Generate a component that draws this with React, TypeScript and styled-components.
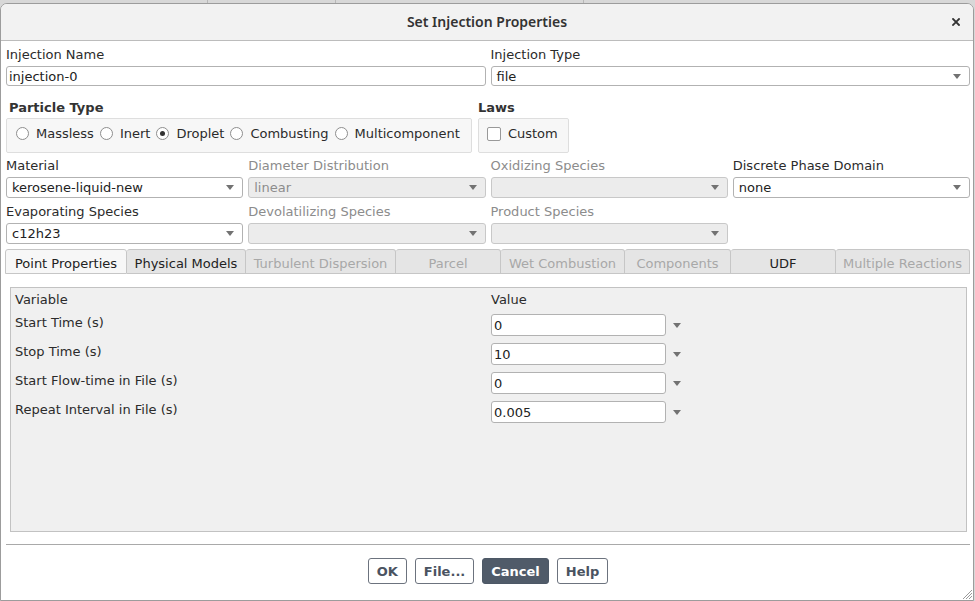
import React from "react";
import styled, { createGlobalStyle } from "styled-components";

const GlobalStyle = createGlobalStyle`
  html, body {
    margin: 0;
    padding: 0;
  }
  body {
    width: 975px;
    height: 601px;
    overflow: hidden;
    background-color: #d8d8d8;
    background-image:
      linear-gradient(to right, transparent 207px, #b8b8b8 207px, #b8b8b8 208px, transparent 208px),
      linear-gradient(to right, transparent 335px, #b8b8b8 335px, #b8b8b8 336px, transparent 336px),
      linear-gradient(to right, transparent 583px, #b8b8b8 583px, #b8b8b8 584px, transparent 584px);
    background-size: 100% 4px;
    background-repeat: no-repeat;
    font-family: "DejaVu Sans", "Liberation Sans", sans-serif;
    font-size: 13px;
    color: #2b2b2b;
  }
`;

const Window = styled.div`
  position: relative;
  box-sizing: border-box;
  width: 974px;
  height: 598px;
  margin-top: 3px;
  border: 1px solid #9c9c9c;
  border-radius: 7px 7px 0 0;
  background: #fff;
  display: flex;
  flex-direction: column;
  overflow: hidden;
`;

const TitleBar = styled.div`
  box-sizing: border-box;
  height: 37px;
  flex: none;
  display: grid;
  grid-template-columns: 1fr auto 1fr;
  align-items: center;
  padding-bottom: 2px;
  background: #f2f2f2;
  border-bottom: 1px solid #bcbcbc;
`;

const Title = styled.div`
  grid-column: 2;
  font-family: "Noto Sans", "DejaVu Sans", sans-serif;
  font-size: 14px;
  font-weight: 600;
  color: #333;
`;

const CloseButton = styled.div`
  grid-column: 3;
  justify-self: end;
  display: flex;
  margin-right: 13px;
  margin-top: 1px;
`;

const Body = styled.div`
  flex: 1;
  display: flex;
  flex-direction: column;
  padding: 6px 3px 0 5px;
`;

const TwoCols = styled.div`
  display: grid;
  grid-template-columns: 1fr 1fr;
  column-gap: 5px;
`;

const FourCols = styled.div`
  display: grid;
  grid-template-columns: repeat(4, 1fr);
  column-gap: 5px;
  row-gap: 6px;
  margin-top: 5px;
`;

const Field = styled.div`
  display: flex;
  flex-direction: column;
  gap: 3px;
  min-width: 0;
`;

const Label = styled.div<{ $disabled?: boolean }>`
  line-height: 16px;
  white-space: nowrap;
  color: ${(p) => (p.$disabled ? "#8c8c8c" : "#2b2b2b")};
`;

const TextInput = styled.div<{ $height?: number }>`
  box-sizing: border-box;
  height: ${(p) => p.$height ?? 20}px;
  display: flex;
  align-items: center;
  padding: 0 2px;
  border: 1px solid #b2b2b2;
  border-radius: 3px;
  background: #fff;
  color: #222;
`;

const SelectBox = styled.div<{ $disabled?: boolean; $height?: number }>`
  box-sizing: border-box;
  height: ${(p) => p.$height ?? 21}px;
  display: flex;
  align-items: center;
  justify-content: space-between;
  padding: 0 8px 0 5px;
  border: 1px solid ${(p) => (p.$disabled ? "#c8c8c8" : "#b2b2b2")};
  border-radius: 3px;
  background: ${(p) => (p.$disabled ? "#ececec" : "#fff")};
  color: ${(p) => (p.$disabled ? "#8c8c8c" : "#222")};
`;

const GroupRow = styled.div`
  display: flex;
  gap: 6px;
  margin-top: 14px;
`;

const Group = styled.div`
  display: flex;
  flex-direction: column;
  gap: 2px;
`;

const GroupTitle = styled.div<{ $indent?: number }>`
  font-weight: bold;
  line-height: 16px;
  padding-left: ${(p) => p.$indent ?? 0}px;
  color: #333;
`;

const GroupBox = styled.div<{ $padLeft: number; $padRight: number }>`
  box-sizing: border-box;
  height: 35px;
  display: flex;
  align-items: center;
  gap: 6px;
  padding: 0 ${(p) => p.$padRight}px 4px ${(p) => p.$padLeft}px;
  background: #f7f7f7;
  border: 1px solid #dedede;
  border-radius: 2px;
`;

const Option = styled.label`
  display: flex;
  align-items: center;
  gap: 7px;
  white-space: nowrap;
`;

const Radio = styled.span<{ $checked?: boolean }>`
  box-sizing: border-box;
  width: 13px;
  height: 13px;
  border-radius: 50%;
  border: 1px solid #8e8e8e;
  background: #fff;
  display: inline-flex;
  align-items: center;
  justify-content: center;
  &::after {
    content: "";
    width: 5px;
    height: 5px;
    border-radius: 50%;
    background: #333;
    display: ${(p) => (p.$checked ? "block" : "none")};
  }
`;

const Checkbox = styled.span`
  box-sizing: border-box;
  width: 14px;
  height: 14px;
  border: 1px solid #999;
  border-radius: 2px;
  background: #fff;
`;

const TabBar = styled.div`
  display: flex;
  height: 25px;
  margin-top: 5px;
  margin-left: -1px;
`;

const Tab = styled.div<{ $width: number; $active?: boolean; $disabled?: boolean; $first?: boolean }>`
  box-sizing: border-box;
  width: ${(p) => p.$width}px;
  display: flex;
  align-items: center;
  justify-content: center;
  padding-top: 3px;
  white-space: nowrap;
  border: 1px solid #c6c6c6;
  border-left: ${(p) => (p.$first ? "1px solid #c6c6c6" : "none")};
  border-radius: 3px 3px 0 0;
  background: ${(p) => (p.$active ? "#f7f7f7" : "#e5e5e5")};
  color: ${(p) => (p.$disabled ? "#a8a8a8" : "#222")};
`;

const Panel = styled.div`
  box-sizing: border-box;
  height: 245px;
  margin: 13px 3px 0 4px;
  padding: 3px 4px;
  background: #f0f0f0;
  border: 1px solid #c2c2c2;
`;

const PropTable = styled.div`
  display: grid;
  grid-template-columns: 476px 175px auto;
  grid-template-rows: 16px;
  grid-auto-rows: 22px;
  row-gap: 7px;
  align-items: center;
`;

const HeaderCell = styled.div<{ $span?: number }>`
  line-height: 16px;
  padding-top: 1px;
  grid-column: span ${(p) => p.$span ?? 1};
`;

const NameCell = styled.div`
  align-self: start;
  line-height: 16px;
  padding-top: 1px;
`;

const ArrowCell = styled.div`
  display: flex;
  padding-left: 7px;
`;

const Separator = styled.div`
  height: 1px;
  margin-top: 12px;
  background: #a9a9a9;
`;

const ButtonRow = styled.div`
  display: flex;
  justify-content: center;
  gap: 8px;
  margin-top: 13px;
`;

const Button = styled.button<{ $primary?: boolean }>`
  box-sizing: border-box;
  height: 26px;
  padding: 0 8px;
  font-family: "DejaVu Sans", sans-serif;
  font-size: 13px;
  font-weight: bold;
  border: 1px solid ${(p) => (p.$primary ? "#4d5866" : "#6c737e")};
  border-radius: 3px;
  background: ${(p) => (p.$primary ? "#505b69" : "#fff")};
  color: ${(p) => (p.$primary ? "#fff" : "#4a5361")};
`;

const Grip = styled.svg`
  position: absolute;
  right: 0;
  bottom: 0;
`;

const Arrow = () => (
  <svg width="8" height="5" viewBox="0 0 8 5">
    <polygon points="0,0 8,0 4,5" fill="#727272" />
  </svg>
);

const Select = ({ value, disabled, height }: { value?: string; disabled?: boolean; height?: number }) => (
  <SelectBox $disabled={disabled} $height={height}>
    <span>{value}</span>
    <Arrow />
  </SelectBox>
);

const particleTypes = [
  { name: "Massless" },
  { name: "Inert" },
  { name: "Droplet", checked: true },
  { name: "Combusting" },
  { name: "Multicomponent" },
];

const tabs = [
  { name: "Point Properties", width: 122, active: true },
  { name: "Physical Models", width: 119 },
  { name: "Turbulent Dispersion", width: 150, disabled: true },
  { name: "Parcel", width: 105, disabled: true },
  { name: "Wet Combustion", width: 124, disabled: true },
  { name: "Components", width: 106, disabled: true },
  { name: "UDF", width: 105 },
  { name: "Multiple Reactions", width: 134, disabled: true },
];

const pointProps = [
  { name: "Start Time (s)", value: "0" },
  { name: "Stop Time (s)", value: "10" },
  { name: "Start Flow-time in File (s)", value: "0" },
  { name: "Repeat Interval in File (s)", value: "0.005" },
];

export default function App() {
  return (
    <>
      <GlobalStyle />
      <Window>
        <TitleBar>
          <Title>Set Injection Properties</Title>
          <CloseButton>
            <svg width="8" height="8" viewBox="0 0 8 8">
              <path d="M1 1 L7 7 M7 1 L1 7" stroke="#333" strokeWidth="1.8" strokeLinecap="square" />
            </svg>
          </CloseButton>
        </TitleBar>
        <Body>
          <TwoCols>
            <Field>
              <Label>Injection Name</Label>
              <TextInput>injection-0</TextInput>
            </Field>
            <Field>
              <Label>Injection Type</Label>
              <Select value="file" height={20} />
            </Field>
          </TwoCols>

          <GroupRow>
            <Group>
              <GroupTitle $indent={3}>Particle Type</GroupTitle>
              <GroupBox $padLeft={9} $padRight={11}>
                {particleTypes.map((t) => (
                  <Option key={t.name}>
                    <Radio $checked={t.checked} />
                    {t.name}
                  </Option>
                ))}
              </GroupBox>
            </Group>
            <Group>
              <GroupTitle>Laws</GroupTitle>
              <GroupBox $padLeft={8} $padRight={10}>
                <Option>
                  <Checkbox />
                  Custom
                </Option>
              </GroupBox>
            </Group>
          </GroupRow>

          <FourCols>
            <Field>
              <Label>Material</Label>
              <Select value="kerosene-liquid-new" />
            </Field>
            <Field>
              <Label $disabled>Diameter Distribution</Label>
              <Select value="linear" disabled />
            </Field>
            <Field>
              <Label $disabled>Oxidizing Species</Label>
              <Select disabled />
            </Field>
            <Field>
              <Label>Discrete Phase Domain</Label>
              <Select value="none" />
            </Field>
            <Field>
              <Label>Evaporating Species</Label>
              <Select value="c12h23" />
            </Field>
            <Field>
              <Label $disabled>Devolatilizing Species</Label>
              <Select disabled />
            </Field>
            <Field>
              <Label $disabled>Product Species</Label>
              <Select disabled />
            </Field>
          </FourCols>

          <TabBar>
            {tabs.map((t, i) => (
              <Tab key={t.name} $width={t.width} $active={t.active} $disabled={t.disabled} $first={i === 0}>
                {t.name}
              </Tab>
            ))}
          </TabBar>

          <Panel>
            <PropTable>
              <HeaderCell>Variable</HeaderCell>
              <HeaderCell $span={2}>Value</HeaderCell>
              {pointProps.map((p) => (
                <React.Fragment key={p.name}>
                  <NameCell>{p.name}</NameCell>
                  <TextInput $height={22}>{p.value}</TextInput>
                  <ArrowCell>
                    <Arrow />
                  </ArrowCell>
                </React.Fragment>
              ))}
            </PropTable>
          </Panel>

          <Separator />

          <ButtonRow>
            <Button>OK</Button>
            <Button>File...</Button>
            <Button $primary>Cancel</Button>
            <Button>Help</Button>
          </ButtonRow>
        </Body>
        <Grip width="13" height="13" viewBox="0 0 13 13">
          <path d="M12 3 L3 12 M12 6 L6 12 M12 9 L9 12" stroke="#9a9a9a" strokeWidth="1" />
        </Grip>
      </Window>
    </>
  );
}
